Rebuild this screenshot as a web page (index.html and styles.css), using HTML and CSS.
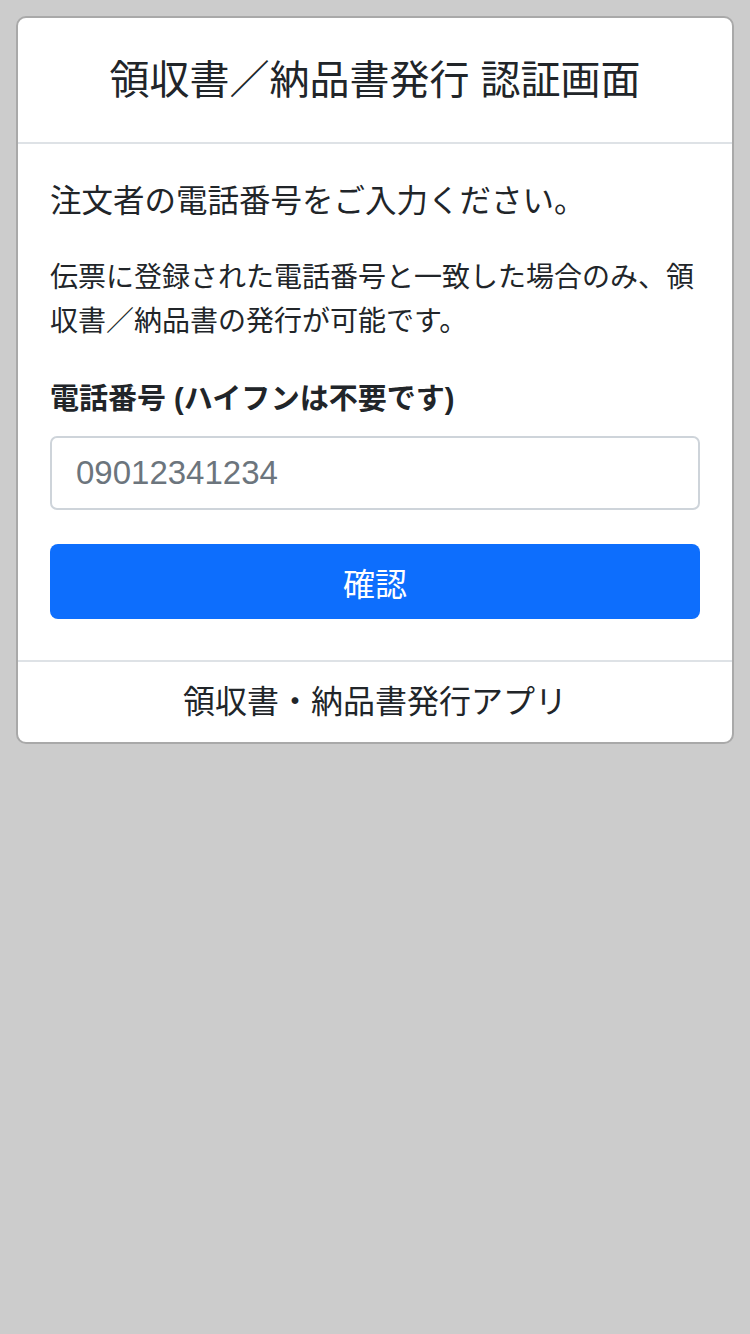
FILE: index.html
```html
<!DOCTYPE html>
<html lang="ja">
<head>
  <meta charset="UTF-8" />
  <meta name="viewport" content="width=device-width, initial-scale=1.0" />
  <title>領収書／納品書発行 認証画面</title>
  <link rel="stylesheet" href="styles.css">
</head>
<body>
  <div class="card">
    <div class="card-header">
      <h1 class="card-title">領収書／納品書発行 認証画面</h1>
    </div>

    <form class="card-body" id="authForm">
      <h5 class="lead">注文者の電話番号をご入力ください。</h5>
      <p class="note">伝票に登録された電話番号と一致した場合のみ、領収書／納品書の発行が可能です。</p>

      <label for="tel" class="form-label">電話番号 (ハイフンは不要です)</label>
      <input type="tel" id="tel" name="tel" class="form-control" placeholder="09012341234" />

      <button type="submit" class="btn">確認</button>
    </form>

    <div class="card-footer">領収書・納品書発行アプリ</div>
  </div>
</body>
</html>
```

FILE: styles.css
```css
body {
  margin: 0;
  padding: 16px;
  background: #cccccc;
  font-family: "Liberation Sans", "Noto Sans CJK JP", sans-serif;
  color: #212529;
}
.card {
  background: #fff;
  border: 2px solid #a9a9a9;
  border-radius: 10px;
  overflow: hidden;
}
.card-header {
  padding: 32px 32px;
  border-bottom: 2px solid #dee2e6;
  text-align: center;
}
.card-title {
  margin: 0;
  font-size: 40px;
  font-weight: normal;
  line-height: 60px;
}
.card-body {
  display: flex;
  flex-direction: column;
  padding: 34px 32px 41px;
}
.lead {
  margin: 0;
  font-size: 31.5px;
  font-weight: normal;
  line-height: 46px;
}
.note {
  margin: 32px 0 0;
  font-size: 28px;
  line-height: 44px;
}
.form-label {
  margin-top: 34px;
  font-size: 29px;
  font-weight: bold;
  line-height: 42px;
}
.form-control {
  margin-top: 16px;
  height: 74px;
  box-sizing: border-box;
  padding: 0 24px;
  border: 2px solid #ced4da;
  border-radius: 7px;
  font-family: inherit;
  font-size: 33px;
  color: #212529;
}
.form-control::placeholder {
  color: #6c757d;
}
.btn {
  margin-top: 34px;
  height: 75px;
  border: none;
  border-radius: 8px;
  background: #0d6efd;
  color: #fff;
  font-family: inherit;
  font-size: 32px;
  cursor: pointer;
}
.card-footer {
  padding: 16px 32px 16px;
  border-top: 2px solid #dee2e6;
  text-align: center;
  font-size: 32px;
  line-height: 48px;
}
```
